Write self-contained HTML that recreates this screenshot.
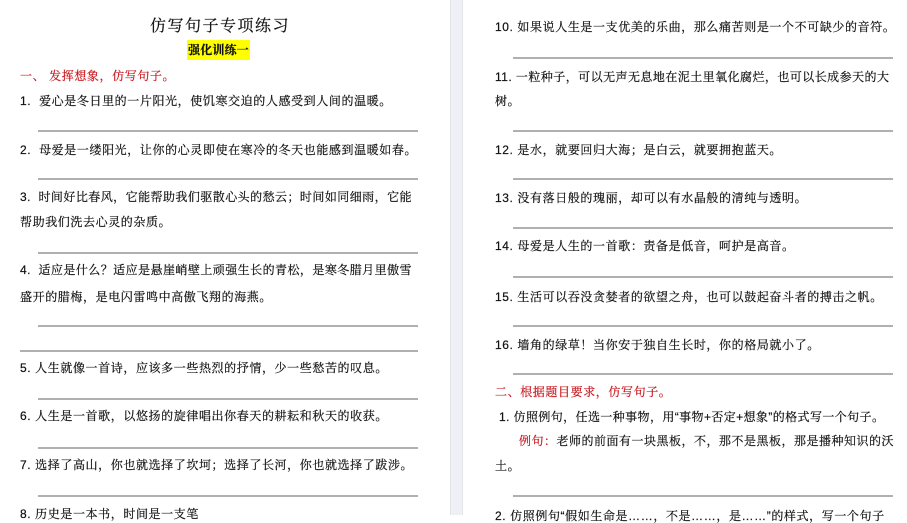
<!DOCTYPE html>
<html><head><meta charset="utf-8"><style>
body{margin:0;width:907px;height:515px;overflow:hidden;background:#fff;position:relative;font-family:"Liberation Sans","Noto Serif CJK SC","Noto Sans CJK SC",serif;color:#111}
.t{position:absolute;font-size:12px;letter-spacing:.6px;white-space:nowrap;line-height:14px;-webkit-text-stroke:.2px #111}
.r{color:#c8161d;-webkit-text-stroke:.2px #c8161d}
.l{position:absolute;height:0;border-top:2px solid #b0b0b0}
.gap{position:absolute;left:450px;top:0;width:11px;height:515px;background:#eef0f5;border-left:1px solid #e2e4ea;border-right:1px solid #e2e4ea}
</style></head><body>
<div class="gap"></div>
<div class="t" style="left:150px;top:18px;font-size:16px;letter-spacing:1.5px;line-height:18px">仿写句子专项练习</div>
<div class="t" style="left:187px;top:40px;background:#ffff00;padding:3px 1px;font-weight:bold;letter-spacing:.2px">强化训练一</div>
<div class="t r" style="left:20px;top:69px">一、 发挥想象，仿写句子。</div>
<div class="t" style="left:20px;top:94px">1.&nbsp; 爱心是冬日里的一片阳光，使饥寒交迫的人感受到人间的温暖。</div>
<div class="l" style="left:38px;width:380px;top:130px"></div>
<div class="t" style="left:20px;top:143px">2.&nbsp; 母爱是一缕阳光，让你的心灵即使在寒冷的冬天也能感到温暖如春。</div>
<div class="l" style="left:38px;width:380px;top:178px"></div>
<div class="t" style="left:20px;top:190px;letter-spacing:.45px">3.&nbsp; 时间好比春风，它能帮助我们驱散心头的愁云；时间如同细雨，它能</div>
<div class="t" style="left:20px;top:215px">帮助我们洗去心灵的杂质。</div>
<div class="l" style="left:38px;width:380px;top:252px"></div>
<div class="t" style="left:20px;top:263px;letter-spacing:.45px">4.&nbsp; 适应是什么？适应是悬崖峭壁上顽强生长的青松，是寒冬腊月里傲雪</div>
<div class="t" style="left:20px;top:290px">盛开的腊梅，是电闪雷鸣中高傲飞翔的海燕。</div>
<div class="l" style="left:38px;width:380px;top:325px"></div>
<div class="l" style="left:20px;width:398px;top:350px"></div>
<div class="t" style="left:20px;top:361px">5. 人生就像一首诗，应该多一些热烈的抒情，少一些愁苦的叹息。</div>
<div class="l" style="left:38px;width:380px;top:398px"></div>
<div class="t" style="left:20px;top:409px">6. 人生是一首歌，以悠扬的旋律唱出你春天的耕耘和秋天的收获。</div>
<div class="l" style="left:38px;width:380px;top:447px"></div>
<div class="t" style="left:20px;top:458px">7. 选择了高山，你也就选择了坎坷；选择了长河，你也就选择了跋涉。</div>
<div class="l" style="left:38px;width:380px;top:495px"></div>
<div class="t" style="left:20px;top:507px">8. 历史是一本书，时间是一支笔</div>

<div class="t" style="left:495px;top:20px">10. 如果说人生是一支优美的乐曲，那么痛苦则是一个不可缺少的音符。</div>
<div class="l" style="left:513px;width:380px;top:57px"></div>
<div class="t" style="left:495px;top:70px;letter-spacing:.45px">11. 一粒种子，可以无声无息地在泥土里氧化腐烂，也可以长成参天的大</div>
<div class="t" style="left:495px;top:94px">树。</div>
<div class="l" style="left:513px;width:380px;top:130px"></div>
<div class="t" style="left:495px;top:143px">12. 是水，就要回归大海；是白云，就要拥抱蓝天。</div>
<div class="l" style="left:513px;width:380px;top:178px"></div>
<div class="t" style="left:495px;top:191px">13. 没有落日般的瑰丽，却可以有水晶般的清纯与透明。</div>
<div class="l" style="left:513px;width:380px;top:227px"></div>
<div class="t" style="left:495px;top:239px">14. 母爱是人生的一首歌：责备是低音，呵护是高音。</div>
<div class="l" style="left:513px;width:380px;top:276px"></div>
<div class="t" style="left:495px;top:290px">15. 生活可以吞没贪婪者的欲望之舟，也可以鼓起奋斗者的搏击之帆。</div>
<div class="l" style="left:513px;width:380px;top:325px"></div>
<div class="t" style="left:495px;top:338px">16. 墙角的绿草！当你安于独自生长时，你的格局就小了。</div>
<div class="l" style="left:513px;width:380px;top:373px"></div>
<div class="t r" style="left:495px;top:385px">二、根据题目要求，仿写句子。</div>
<div class="t" style="left:499px;top:410px;letter-spacing:.4px">1. 仿照例句，任选一种事物，用“事物+否定+想象”的格式写一个句子。</div>
<div class="t" style="left:519px;top:434px;letter-spacing:.5px"><span class="r">例句：</span>老师的前面有一块黑板，不，那不是黑板，那是播种知识的沃</div>
<div class="t" style="left:495px;top:459px">土。</div>
<div class="l" style="left:513px;width:380px;top:495px"></div>
<div class="t" style="left:495px;top:509px">2. 仿照例句“假如生命是……，不是……，是……”的样式，写一个句子</div>
</body></html>
